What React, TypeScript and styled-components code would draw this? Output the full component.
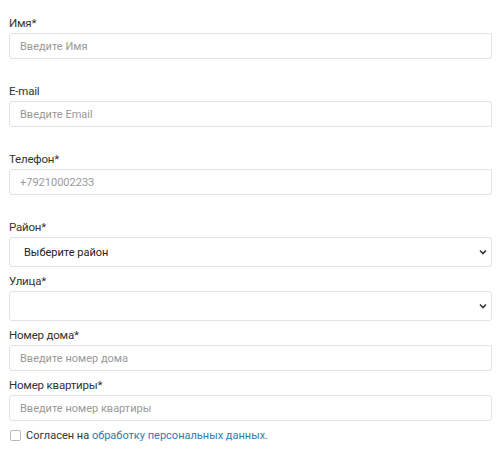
import React from "react";
import styled, { createGlobalStyle } from "styled-components";

const Global = createGlobalStyle`
  html, body { margin: 0; padding: 0; background: #fff; }
  body { font-family: Roboto, "Noto Sans", Arial, sans-serif; }
  * { box-sizing: border-box; }
`;

const Form = styled.form`
  width: 500px;
  padding: 15px 8px 0 9px;
  display: flex;
  flex-direction: column;
`;

const Group = styled.div<{ $gap: number }>`
  display: flex;
  flex-direction: column;
  margin-bottom: ${(p) => p.$gap}px;
`;

const Label = styled.label`
  font-size: 11.5px;
  letter-spacing: -0.2px;
  line-height: 16px;
  color: #333;
  margin-bottom: 2px;
`;

const Input = styled.input`
  height: 26px;
  width: 100%;
  border: 1px solid #e2e2e2;
  border-radius: 3px;
  padding: 0 10px;
  font-family: Roboto, Arial, sans-serif;
  font-size: 11px;
  color: #333;
  background: #fff;
  outline: none;
  &::placeholder { color: #999; }
`;

const SelectWrap = styled.div`
  position: relative;
  height: 30px;
  border: 1px solid #e2e2e2;
  border-radius: 3px;
  background: #fff;
  display: flex;
  align-items: center;
  padding: 0 14px;
  font-size: 11px;
  color: #222;
`;

const Chevron = styled.svg`
  position: absolute;
  right: 4px;
  top: 50%;
  margin-top: -4px;
`;

const CheckRow = styled.div`
  display: flex;
  align-items: center;
  gap: 5px;
  font-size: 11px;
  color: #333;
  padding-left: 1px;
`;

const Box = styled.span`
  width: 11px;
  height: 11px;
  border: 1px solid #bbb;
  border-radius: 2px;
  background: #fff;
`;

const Link = styled.a`
  color: #2d7cb3;
  text-decoration: none;
`;

const Select = ({ text }: { text: string }) => (
  <SelectWrap>
    {text}
    <Chevron width="8" height="8" viewBox="0 0 8 8">
      <path d="M1 2.5 L4 5.5 L7 2.5" fill="none" stroke="#333" strokeWidth="1.6" />
    </Chevron>
  </SelectWrap>
);

export default function App() {
  return (
    <>
      <Global />
      <Form>
        <Group $gap={24}>
          <Label>Имя*</Label>
          <Input placeholder="Введите Имя" />
        </Group>
        <Group $gap={24}>
          <Label>E-mail</Label>
          <Input placeholder="Введите Email" />
        </Group>
        <Group $gap={24}>
          <Label>Телефон*</Label>
          <Input placeholder="+79210002233" />
        </Group>
        <Group $gap={6}>
          <Label>Район*</Label>
          <Select text="Выберите район" />
        </Group>
        <Group $gap={6}>
          <Label>Улица*</Label>
          <Select text="" />
        </Group>
        <Group $gap={6}>
          <Label>Номер дома*</Label>
          <Input placeholder="Введите номер дома" />
        </Group>
        <Group $gap={8}>
          <Label>Номер квартиры*</Label>
          <Input placeholder="Введите номер квартиры" />
        </Group>
        <CheckRow>
          <Box />
          <span>
            Согласен на <Link href="#">обработку персональных данных.</Link>
          </span>
        </CheckRow>
      </Form>
    </>
  );
}
